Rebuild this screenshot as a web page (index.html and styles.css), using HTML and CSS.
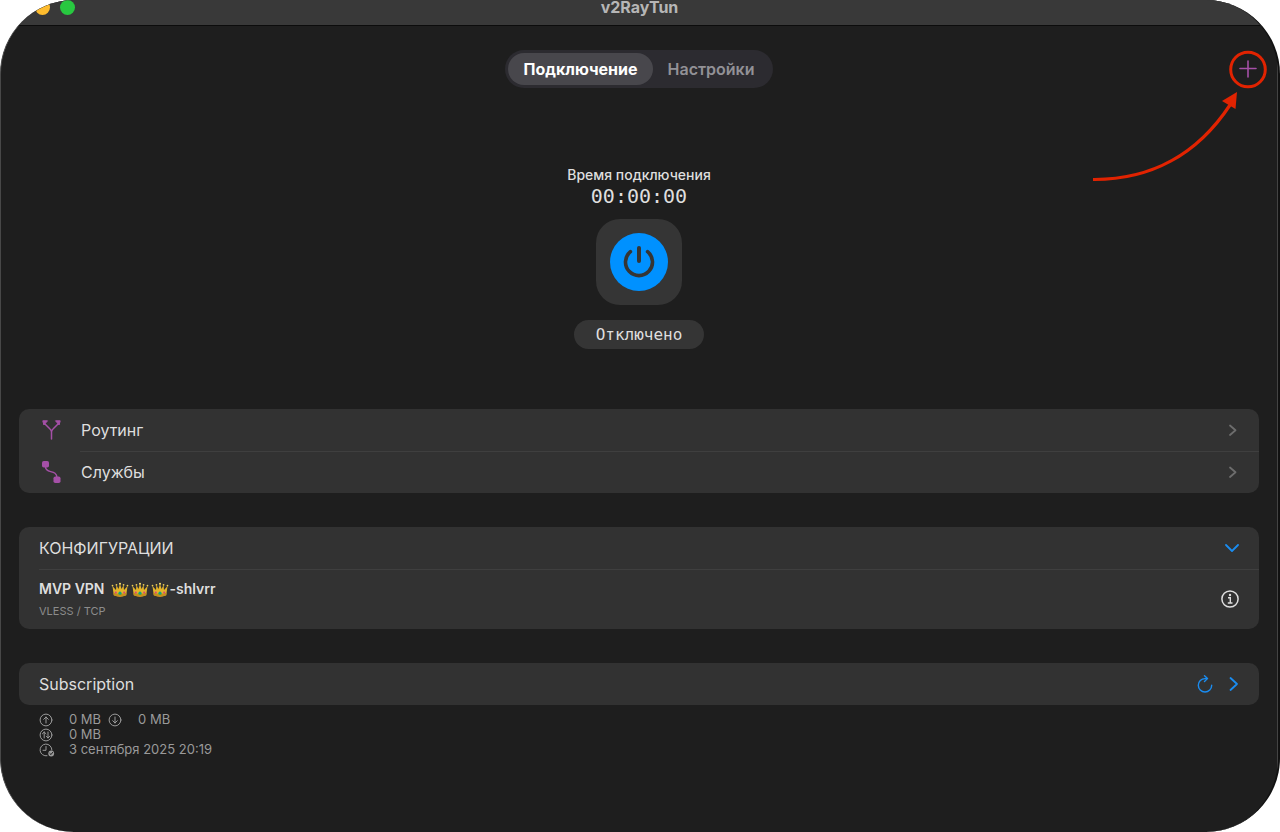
FILE: index.html
```html
<!DOCTYPE html>
<html lang="ru">
<head>
<meta charset="utf-8" />
<meta name="viewport" content="width=device-width, initial-scale=1.0" />
<title>v2RayTun</title>
<link rel="stylesheet" href="styles.css">
</head>
<body>

<!-- shared shapes -->
<svg width="0" height="0" class="defs" aria-hidden="true">
	<symbol id="chevron" viewBox="0 0 12 16">
		<path d="M3 3.500 L8.500 8.300 L3 13" fill="none" stroke="currentColor" stroke-width="1.800" stroke-linecap="round" stroke-linejoin="round" />
	</symbol>
	<symbol id="crown" viewBox="0 0 20 18">
		<path d="M1.5 4.5 L5.5 9 L6 3.5 L8.3 8 L10 2 L11.7 8 L14 3.5 L14.5 9 L18.5 4.5 L17 15 Q10 18 3 15 Z" fill="#e3b32a" />
		<path d="M2.7 12 Q10 14.6 17.3 12 L17 15 Q10 18 3 15 Z" fill="#c28f1c" />
		<circle cx="1.6" cy="4" r="1" fill="#f0cd55" />
		<circle cx="6" cy="3.2" r="1" fill="#f0cd55" />
		<circle cx="10" cy="2" r="1.2" fill="#f7dc6c" />
		<circle cx="14" cy="3.2" r="1" fill="#f0cd55" />
		<circle cx="18.4" cy="4" r="1" fill="#f0cd55" />
		<circle cx="10" cy="12.6" r="1.8" fill="#12a579" />
		<circle cx="5.3" cy="11.8" r="1.2" fill="#d8457c" />
		<circle cx="14.7" cy="11.8" r="1.2" fill="#d8457c" />
	</symbol>
</svg>

<div class="window">
	<header class="titlebar">
		<div class="lights">
			<span class="light red"></span>
			<span class="light yellow"></span>
			<span class="light green"></span>
		</div>
		<h1>v2RayTun</h1>
	</header>

	<main>
		<div class="toolbar">
			<nav class="tabs">
				<button type="button" class="tab active">Подключение</button>
				<button type="button" class="tab">Настройки</button>
			</nav>
			<div class="add">
				<button type="button" class="add-button" aria-label="Добавить">
					<svg width="18" height="18" viewBox="0 0 18 18"><path d="M9 1 V17 M1 8.5 H17" stroke="#a550a7" stroke-width="1.6" stroke-linecap="round" /></svg>
				</button>
				<svg class="pointer" width="180" height="136" viewBox="0 0 180 136">
					<circle cx="158" cy="21.500" r="17.300" fill="none" stroke="#e12301" stroke-width="3" />
					<path d="M3 131.500 C60 132 107 107 140 57" fill="none" stroke="#e12301" stroke-width="3.200" />
					<path d="M147 44 L132 53 L145.500 61 Z" fill="#e12301" />
				</svg>
			</div>
		</div>

		<section class="connection">
			<p class="label">Время подключения</p>
			<p class="timer">00:00:00</p>
			<button type="button" class="power" aria-label="Подключить">
				<svg width="58" height="58" viewBox="0 0 58 58">
					<circle cx="29" cy="29" r="29" fill="#0091ff" />
					<path d="M20.400 18.700 A13.500 13.500 0 1 0 37.600 18.700" fill="none" stroke="#353535" stroke-width="3.600" stroke-linecap="round" />
					<path d="M29 15 V28" stroke="#353535" stroke-width="4" stroke-linecap="round" />
				</svg>
			</button>
			<p class="status">Отключено</p>
		</section>

		<nav class="card">
			<a href="#routing" class="row link">
				<svg class="row-icon" width="20" height="20" viewBox="0 0 20 20">
					<path d="M9.500 19 V12 Q9.500 10.300 8 9 L3 4 M9.500 12 Q9.500 10.300 11 9 L16 4" fill="none" stroke="#a550a7" stroke-width="1.500" stroke-linecap="round" />
					<path d="M.8 .8 H5.500 L1.900 5 Z M18.200 .8 H13.500 L17.100 5 Z" fill="#a550a7" stroke="#a550a7" stroke-linejoin="round" />
				</svg>
				<span class="row-title">Роутинг</span>
				<svg class="gray" width="12" height="16"><use href="#chevron" /></svg>
			</a>
			<a href="#services" class="row link">
				<svg class="row-icon" width="20" height="22" viewBox="0 0 20 22">
					<path d="M3.500 6 C3.500 13 15 8 15 17" fill="none" stroke="#a550a7" stroke-width="1.400" />
					<rect x="0" y="0" width="7" height="6.500" rx="1.800" fill="#a550a7" />
					<rect x="11.500" y="15.500" width="7" height="6.500" rx="1.800" fill="#a550a7" />
				</svg>
				<span class="row-title">Службы</span>
				<svg class="gray" width="12" height="16"><use href="#chevron" /></svg>
			</a>
		</nav>

		<section class="card">
			<div class="row">
				<h2>КОНФИГУРАЦИИ</h2>
				<button type="button" class="icon-button" aria-label="Свернуть">
					<svg width="14" height="12" viewBox="0 0 14 12"><path d="M1 3 L7 9 L13 3" fill="none" stroke="currentColor" stroke-width="1.800" stroke-linecap="round" stroke-linejoin="round" /></svg>
				</button>
			</div>
			<div class="row config">
				<div>
					<h3>MVP VPN
						<span class="crowns"><svg width="20" height="16"><use href="#crown" /></svg><svg width="20" height="16"><use href="#crown" /></svg><svg width="20" height="16"><use href="#crown" /></svg></span>-shlvrr</h3>
					<p class="protocol">VLESS / TCP</p>
				</div>
				<button type="button" class="icon-button info" aria-label="Информация">
					<svg width="18" height="18" viewBox="0 0 18 18" fill="none" stroke="currentColor">
						<circle cx="9" cy="9" r="8.100" stroke-width="1.500" />
						<path d="M7 7.800 H9.300 V12.800 M6.800 13 H11.500" stroke-width="1.400" />
						<circle cx="9" cy="5" r="1.200" fill="currentColor" stroke="none" />
					</svg>
				</button>
			</div>
		</section>

		<section class="subscription">
			<div class="card">
				<div class="row">
					<h2>Subscription</h2>
					<button type="button" class="icon-button" aria-label="Обновить">
						<svg width="16" height="18" viewBox="0 0 16 18" fill="none" stroke="currentColor" stroke-width="1.400" stroke-linecap="round" stroke-linejoin="round">
							<path d="M10 3.600 H8 A6.700 6.700 0 1 0 14.700 10.300" />
							<path d="M7.500 .8 L10.500 3.600 L7.500 6.500" />
						</svg>
					</button>
					<button type="button" class="icon-button next" aria-label="Открыть">
						<svg width="10" height="16" viewBox="0 0 10 16"><path d="M1.500 2 L8 8 L1.500 14" fill="none" stroke="currentColor" stroke-width="1.800" stroke-linecap="round" stroke-linejoin="round" /></svg>
					</button>
				</div>
			</div>
			<ul class="stats">
				<li>
					<svg width="16" height="14" viewBox="0 0 16 14"><circle cx="7" cy="7" r="5.900" /><path d="M7 10 V4 M4.700 6.300 L7 4 L9.300 6.300" /></svg>
					<span>0 MB</span>
					<svg width="16" height="14" viewBox="0 0 16 14"><circle cx="7" cy="7" r="5.900" /><path d="M7 4 V10 M4.700 7.700 L7 10 L9.300 7.700" /></svg>
					<span>0 MB</span>
				</li>
				<li>
					<svg width="16" height="14" viewBox="0 0 16 14"><circle cx="7" cy="7" r="5.900" /><path d="M5.200 10 V4 M3.400 5.800 L5.200 4 L7 5.800 M9 4 V10 M7.300 8.200 L9 10 L10.700 8.200" /></svg>
					<span>0 MB</span>
				</li>
				<li>
					<svg width="16" height="14" viewBox="0 0 16 14"><path d="M8 12.800 A5.900 5.900 0 1 1 12.900 7 M7 3.500 V7.300 H4" /><circle cx="12.200" cy="10.500" r="2.900" fill="currentColor" stroke="none" /><path d="M10.900 10.500 L12 11.600 L13.600 9.400" stroke="#1e1e1e" /></svg>
					<span>3 сентября 2025 20:19</span>
				</li>
			</ul>
		</section>
	</main>
</div>

</body>
</html>
```

FILE: styles.css
```css
* { box-sizing: border-box; }

body {
	margin: 0;
	background: #fff;
	color: #dedede;
	font-family: Inter, "Liberation Sans", sans-serif;
	font-size: 16px;
}

h1, h2, h3, p, ul {
	margin: 0;
	padding: 0;
	font-weight: normal;
}

button {
	padding: 0;
	border: 0;
	background: none;
	color: inherit;
	font: inherit;
}

svg { display: block; }

.defs { position: absolute; }

.window {
	min-height: 100vh;
	overflow: hidden;
	border-radius: 74px;
	border-left: 1px solid #484848;
	border-right: 2px solid #111;
	background: #1e1e1e;
}

/* title bar */

.titlebar {
	display: grid;
	grid-template-columns: 1fr auto 1fr;
	height: 26px;
	border-bottom: 1px solid #0c0c0c;
	background: #393939;
}

.titlebar h1 {
	color: #b6b6b6;
	font-size: 16px;
	font-weight: 700;
	line-height: 15px;
}

.lights {
	display: flex;
	gap: 10px;
	padding-left: 9px;
}

.light {
	width: 15px;
	height: 15px;
	border-radius: 50%;
}

.red { background: #ff5f57; }
.yellow { background: #febc2e; }
.green { background: #28c840; }

main {
	min-height: calc(100vh - 26px);
	padding: 24px 18px 70px;
	border-right: 1px solid #444;
}

/* tabs and add button */

.toolbar {
	display: grid;
	grid-template-columns: 1fr auto 1fr;
	margin: 0 -8px;
}

.tabs {
	grid-column: 2;
	display: flex;
	padding: 3px;
	border-radius: 19px;
	background: #2c2b30;
}

.tab {
	height: 32px;
	padding: 0 15px;
	border-radius: 16px;
	color: #929196;
	font-weight: 600;
}

.tab.active {
	background: #48474c;
	color: #fff;
	font-weight: 700;
}

.add {
	position: relative;
	justify-self: end;
}

.add-button {
	display: grid;
	place-items: center;
	width: 38px;
	height: 38px;
}

.pointer {
	position: absolute;
	top: -2px;
	right: -3px;
	pointer-events: none;
}

/* connection state */

.connection {
	display: flex;
	flex-direction: column;
	align-items: center;
	margin: 77px 0 60px;
}

.label {
	font-size: 14px;
	font-weight: 500;
	line-height: 20px;
}

.timer {
	font-family: "DejaVu Sans Mono", monospace;
	font-size: 20px;
	line-height: 22px;
}

.power {
	display: grid;
	place-items: center;
	width: 86px;
	height: 86px;
	margin: 12px 0 15px;
	border-radius: 24px;
	background: #353535;
}

.status {
	padding: 0 22px;
	border-radius: 15px;
	background: #353535;
	font-family: "DejaVu Sans Mono", monospace;
	font-size: 16px;
	line-height: 29px;
}

/* cards */

.card {
	margin-bottom: 34px;
	border-radius: 10px;
	background: #323232;
}

.row {
	position: relative;
	display: flex;
	align-items: center;
	min-height: 42px;
	padding: 0 20px;
}

.row + .row::before {
	content: "";
	position: absolute;
	top: 0;
	left: 20px;
	right: 0;
	height: 1px;
	background: #3f3f3f;
}

.link + .link::before { left: 61px; }

.link {
	padding-left: 23px;
	color: inherit;
	text-decoration: none;
}

.row-icon { margin-right: 19px; }

.row-title,
.row h2 {
	flex: 1;
	font-size: 16px;
	line-height: 20px;
}

.gray { color: #6d6d6d; }

.config {
	justify-content: space-between;
	min-height: 60px;
}

.config h3 {
	display: flex;
	align-items: center;
	gap: 5px;
	font-size: 14px;
	font-weight: 600;
	line-height: 22px;
}

.crowns {
	display: flex;
	margin-right: -5px;
	padding-top: 2px;
}

.protocol {
	padding-top: 2px;
	color: #8c8c8c;
	font-size: 11px;
	line-height: 18px;
}

.icon-button { color: #1a8cf0; }

.info { color: #dedede; }

.next { margin-left: 16px; }

/* traffic and expiry */

.subscription .card { margin-bottom: 7px; }

.stats {
	padding-left: 20px;
	list-style: none;
	color: #9a9a9a;
	font-size: 13px;
	line-height: 15px;
}

.stats li {
	display: flex;
	align-items: center;
}

.stats span { margin: 0 7px 0 14px; }

.stats svg {
	fill: none;
	stroke: currentColor;
	stroke-width: 1;
	stroke-linecap: round;
	stroke-linejoin: round;
}
```
